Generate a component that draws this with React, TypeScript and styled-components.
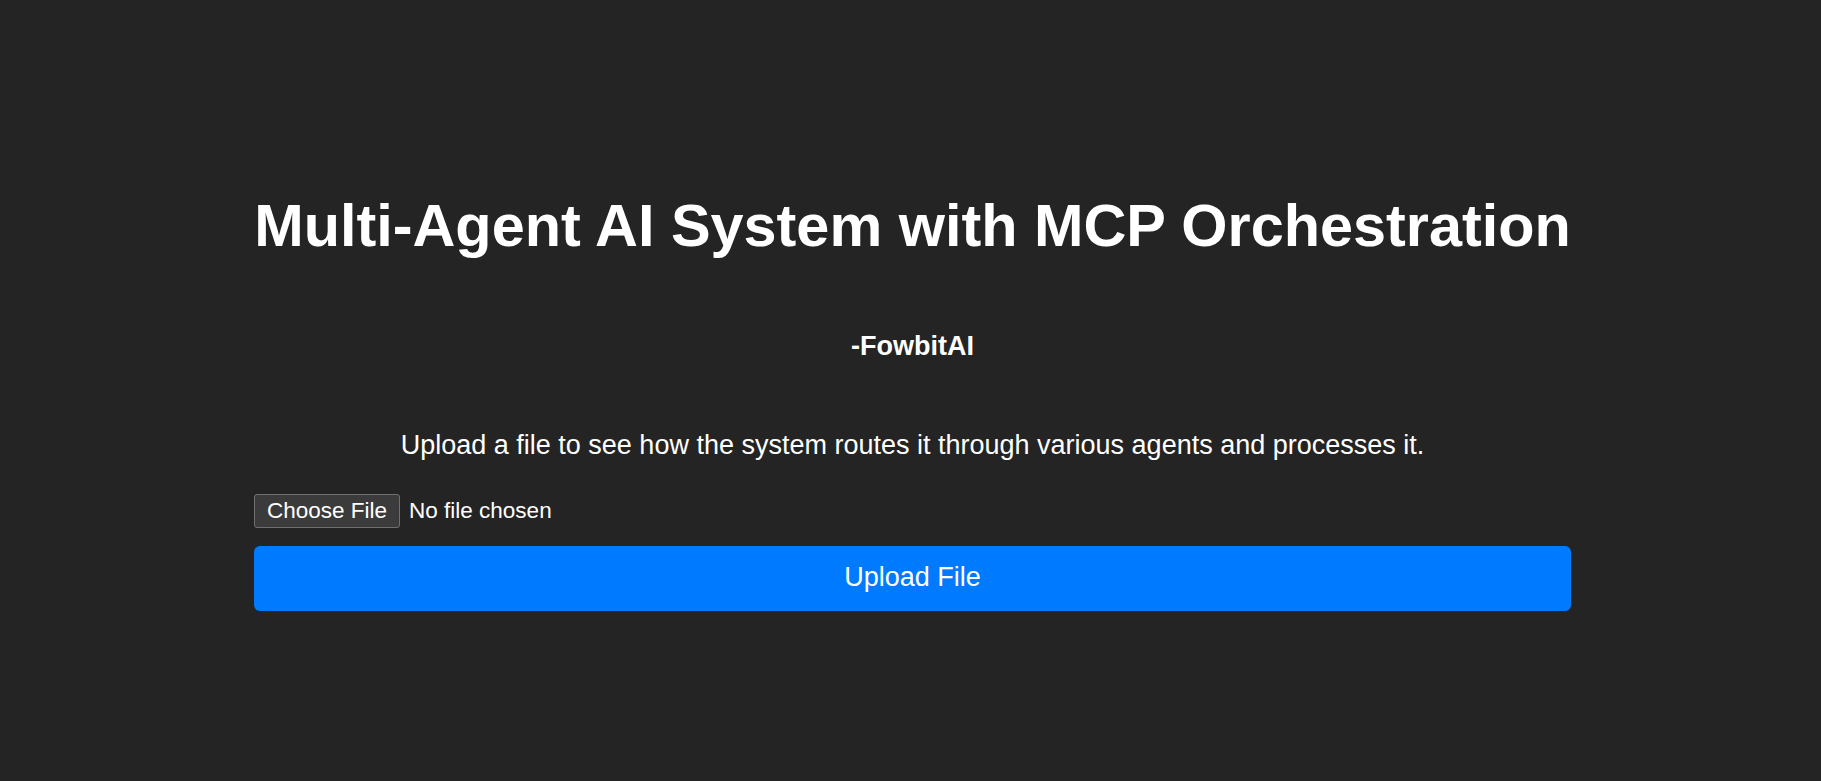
import React from "react";
import styled, { createGlobalStyle } from "styled-components";

const GlobalStyle = createGlobalStyle`
  html, body {
    margin: 0;
    padding: 0;
    background: #242424;
    font-family: "Liberation Sans", Arial, sans-serif;
    color: #ffffff;
  }
  #root {
    min-height: 100vh;
  }
`;

const Page = styled.main`
  min-height: 781px;
  display: flex;
  justify-content: center;
  padding-left: 4px;
  box-sizing: border-box;
`;

const Container = styled.section`
  width: 1317px;
  display: flex;
  flex-direction: column;
  align-items: stretch;
  padding-top: 192px;
`;

const Title = styled.h1`
  margin: 0;
  font-size: 59.4px;
  line-height: 68px;
  font-weight: 700;
  text-align: center;
  color: #ffffff;
`;

const Subtitle = styled.h3`
  margin: 71px 0 0;
  font-size: 27px;
  line-height: 31px;
  font-weight: 700;
  text-align: center;
  color: #ffffff;
`;

const Description = styled.p`
  margin: 68px 0 0;
  font-size: 27px;
  line-height: 31px;
  text-align: center;
  color: #ffffff;
`;

const FileRow = styled.label`
  margin-top: 33px;
  display: flex;
  align-items: center;
  gap: 9px;
  cursor: pointer;
`;

const HiddenInput = styled.input`
  display: none;
`;

const ChooseButton = styled.span`
  box-sizing: border-box;
  height: 34px;
  padding: 0 12px;
  display: inline-flex;
  align-items: center;
  background: #3b3b3b;
  border: 1px solid #6f6f6f;
  border-radius: 3px;
  font-size: 22.5px;
  color: #ffffff;
`;

const FileName = styled.span`
  font-size: 22.5px;
  color: #ffffff;
`;

const UploadButton = styled.button`
  margin-top: 18px;
  height: 65px;
  width: 100%;
  border: none;
  border-radius: 6px;
  background: #007bff;
  color: #ffffff;
  font-family: "Liberation Sans", Arial, sans-serif;
  font-size: 27px;
  cursor: pointer;
  padding: 0 0 3px;
`;

export default function App() {
  return (
    <>
      <GlobalStyle />
      <Page>
        <Container>
          <Title>Multi-Agent AI System with MCP Orchestration</Title>
          <Subtitle>-FowbitAI</Subtitle>
          <Description>
            Upload a file to see how the system routes it through various agents and processes it.
          </Description>
          <FileRow>
            <HiddenInput type="file" />
            <ChooseButton>Choose File</ChooseButton>
            <FileName>No file chosen</FileName>
          </FileRow>
          <UploadButton type="button">Upload File</UploadButton>
        </Container>
      </Page>
    </>
  );
}
